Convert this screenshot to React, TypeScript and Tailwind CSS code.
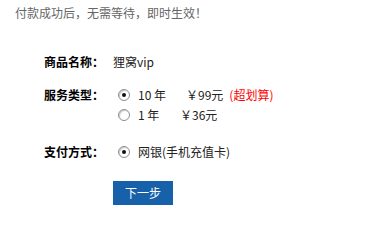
import React from 'react';

const Radio: React.FC<{ checked?: boolean }> = ({ checked }) => (
    <span className="ml-[5px] mr-[8px] flex h-[12px] w-[12px] shrink-0 items-center justify-center rounded-full border border-[#8e8e8e] bg-white shadow-[inset_1px_1px_1px_#c8c8c8]">
        {checked && <span className="h-[4px] w-[4px] rounded-full bg-[#111]"></span>}
    </span>
);

const App: React.FC = () => {
    return (
        <div className="h-[229px] w-[385px] bg-white text-[12px] text-[#222]" style={{ fontFamily: '"Noto Sans CJK SC", "Noto Sans", sans-serif' }}>
            {/* Notice */}
            <div className="h-[26px] pl-[15px] leading-[26px] text-[#666]">付款成功后，无需等待，即时生效！</div>

            <div className="pl-[44px]">
                {/* Product */}
                <div className="mt-[26px] flex h-[20px] items-center">
                    <div className="w-[69px] shrink-0 font-bold text-black">商品名称：</div>
                    <div>狸窝vip</div>
                </div>

                {/* Service type */}
                <div className="mt-[13px] flex items-start">
                    <div className="h-[20px] w-[69px] shrink-0 font-bold leading-[20px] text-black">服务类型：</div>
                    <div className="flex flex-col">
                        <label className="flex h-[20px] items-center">
                            <Radio checked />
                            <span className="w-[48px]">10 年</span>
                            <span>￥99元</span>
                            <span className="ml-[6px] text-[#f00]">(超划算)</span>
                        </label>
                        <label className="flex h-[20px] items-center">
                            <Radio />
                            <span className="w-[42px]">1 年</span>
                            <span>￥36元</span>
                        </label>
                    </div>
                </div>

                {/* Payment */}
                <div className="mt-[17px] flex h-[20px] items-center">
                    <div className="w-[69px] shrink-0 font-bold text-black">支付方式：</div>
                    <label className="flex items-center">
                        <Radio checked />
                        <span>网银(手机充值卡)</span>
                    </label>
                </div>

                <div className="mt-[19px] pl-[69px]">
                    <button className="h-[24px] w-[60px] bg-[#1761ab] text-[12px] text-white">下一步</button>
                </div>
            </div>
        </div>
    );
};

export default App;
